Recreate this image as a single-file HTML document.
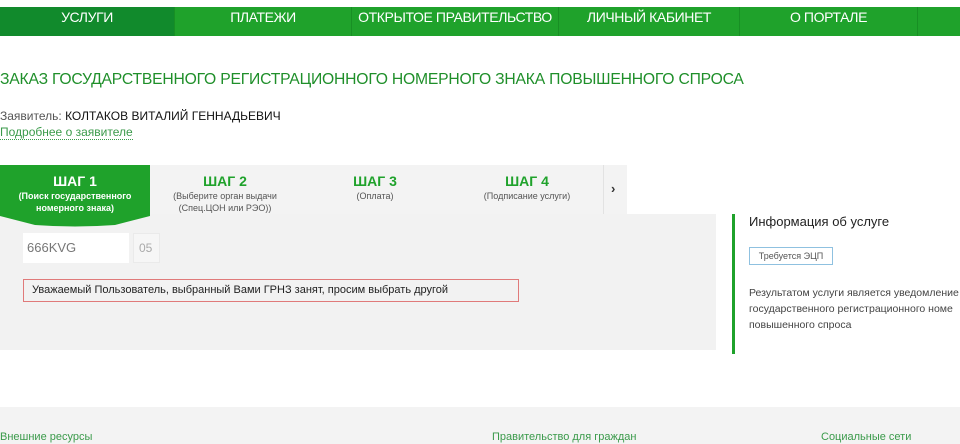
<!DOCTYPE html>
<html><head><meta charset="utf-8"><style>
*{margin:0;padding:0;box-sizing:border-box}
body{width:960px;height:444px;overflow:hidden;background:#fff;font-family:"Liberation Sans",sans-serif;position:relative;color:#222}
.a{position:absolute}
.nav{top:7px;left:0;width:960px;height:29px;background:#1fa22b}
.nav div{position:absolute;top:0;height:29px;line-height:20px;color:#fff;font-size:14px;text-align:center;border-right:1px solid #188f24;letter-spacing:-0.4px;white-space:nowrap}
.st{position:absolute;top:8px;text-align:center;color:#555;font-size:9px;line-height:12px}
.st b{display:block;color:#1fa22b;font-size:14px;line-height:16px;margin-bottom:1px}
</style></head><body>
<div class="a nav">
<div style="left:0;width:175px;background:#118a2c">УСЛУГИ</div>
<div style="left:175px;width:177px">ПЛАТЕЖИ</div>
<div style="left:352px;width:207px">ОТКРЫТОЕ ПРАВИТЕЛЬСТВО</div>
<div style="left:559px;width:181px">ЛИЧНЫЙ КАБИНЕТ</div>
<div style="left:740px;width:178px">О ПОРТАЛЕ</div>
</div>
<div class="a" style="left:0;top:71px;font-size:15.7px;color:#1f8f2a;white-space:nowrap;letter-spacing:-0.2px">ЗАКАЗ ГОСУДАРСТВЕННОГО РЕГИСТРАЦИОННОГО НОМЕРНОГО ЗНАКА ПОВЫШЕННОГО СПРОСА</div>
<div class="a" style="left:0;top:109px;font-size:12px;color:#555">Заявитель: <span style="color:#111">КОЛТАКОВ ВИТАЛИЙ ГЕННАДЬЕВИЧ</span></div>
<div class="a" style="left:0;top:125px;font-size:12px;color:#3a9a4a;border-bottom:1px dotted #3a9a4a;line-height:14px">Подробнее о заявителе</div>
<div class="a" style="left:0;top:165px;width:627px;height:49px;background:#f3f3f3"></div>
<div class="a" style="left:603px;top:165px;width:1px;height:49px;background:#e2e2e2"></div>
<div class="a" style="left:611px;top:181px;font-size:13px;color:#333;font-weight:bold">›</div>
<div class="a" style="left:0;top:214px;width:716px;height:136px;background:#f2f2f2"></div>
<div class="a" style="left:0;top:165px;width:150px;height:49px;background:#1fa22b"></div>
<svg class="a" style="left:0;top:213px" width="150" height="14"><path d="M0 0H150V3L115 12Q75 15 35 12L0 3Z" fill="#1fa22b"/></svg>
<div class="st" style="left:0;width:150px;color:#fff;font-weight:bold;top:173px"><b style="color:#fff">ШАГ 1</b>(Поиск государственного<br>номерного знака)</div>
<div class="st" style="left:150px;width:150px;top:173px"><b>ШАГ 2</b>(Выберите орган выдачи<br>(Спец.ЦОН или РЭО))</div>
<div class="st" style="left:300px;width:150px;top:173px"><b>ШАГ 3</b>(Оплата)</div>
<div class="st" style="left:452px;width:150px;top:173px"><b>ШАГ 4</b>(Подписание услуги)</div>
<div class="a" style="left:23px;top:233px;width:106px;height:30px;background:#fff;color:#777;font-size:13px;line-height:30px;padding-left:4px">666KVG</div>
<div class="a" style="left:133px;top:233px;width:27px;height:30px;background:#f6f6f6;border:1px solid #eaeaea;color:#aaa;font-size:12px;line-height:28px;padding-left:5px">05</div>
<div class="a" style="left:23px;top:279px;width:496px;height:23px;border:1px solid #e07a7a;font-size:11px;line-height:21px;padding-left:8px;color:#222">Уважаемый Пользователь, выбранный Вами ГРНЗ занят, просим выбрать другой</div>
<div class="a" style="left:732px;top:214px;width:3px;height:140px;background:#1fa22b"></div>
<div class="a" style="left:749px;top:214px;font-size:13px;color:#222">Информация об услуге</div>
<div class="a" style="left:749px;top:247px;width:84px;height:18px;border:1px solid #8fc1e0;font-size:9px;line-height:16px;text-align:center;color:#555">Требуется ЭЦП</div>
<div class="a" style="left:749px;top:285px;font-size:10.5px;line-height:16px;color:#444;white-space:nowrap">Результатом услуги является уведомление<br>государственного регистрационного номе<br>повышенного спроса</div>
<div class="a" style="left:0;top:407px;width:960px;height:37px;background:#f3f3f3"></div>
<div class="a" style="left:0;top:431px;font-size:11px;color:#3a9a4a">Внешние ресурсы</div>
<div class="a" style="left:492px;top:431px;font-size:11px;color:#3a9a4a">Правительство для граждан</div>
<div class="a" style="left:821px;top:431px;font-size:11px;color:#3a9a4a">Социальные сети</div>
</body></html>
